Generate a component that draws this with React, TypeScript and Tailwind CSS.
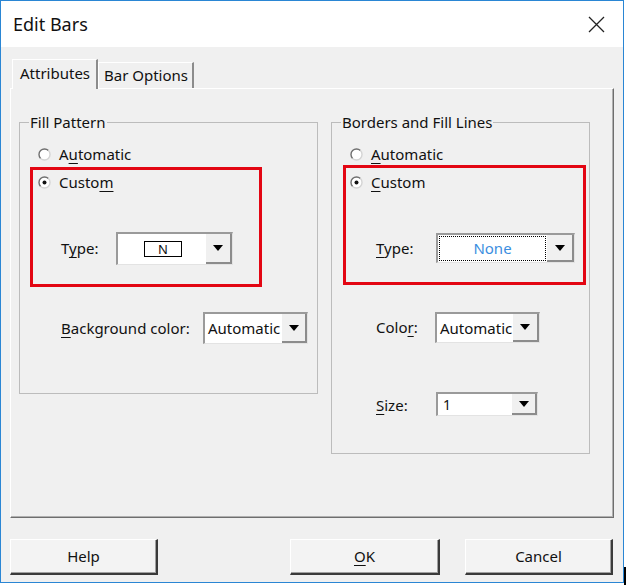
import type { ReactNode } from "react";

const Radio = ({ checked }: { checked?: boolean }) => (
  <svg width="13" height="13" viewBox="0 0 13 13" className="shrink-0">
    <circle cx="6.5" cy="6.5" r="5.5" fill="#ffffff" />
    <path d="M2.6 10.4 A5.5 5.5 0 0 1 10.4 2.6" fill="none" stroke="#6f6f6f" strokeWidth="1.4" />
    <path d="M10.4 2.6 A5.5 5.5 0 0 1 2.6 10.4" fill="none" stroke="#d4d4d4" strokeWidth="1.4" />
    {checked && <circle cx="6.5" cy="6.5" r="2" fill="#111111" />}
  </svg>
);

const Arrow = () => (
  <svg width="10" height="6" viewBox="0 0 10 6">
    <polygon points="0,0 10,0 5,6" fill="#000000" />
  </svg>
);

const Combo = ({
  className,
  btn,
  children,
}: {
  className: string;
  btn: string;
  children: ReactNode;
}) => (
  <div
    className={`flex border-t-2 border-l-2 border-r border-b border-t-[#9a9a9a] border-l-[#9a9a9a] border-r-[#e3e3e3] border-b-[#e3e3e3] bg-white ${className}`}
  >
    <div className="flex min-w-0 flex-1 items-center overflow-hidden whitespace-nowrap">{children}</div>
    <div
      className={`flex items-center justify-center border-r-2 border-b-2 border-r-[#8c8c8c] border-b-[#8c8c8c] bg-[#f0f0f0] ${btn}`}
    >
      <Arrow />
    </div>
  </div>
);

const U = ({ children }: { children: ReactNode }) => (
  <span className="underline decoration-1 underline-offset-[3px]">{children}</span>
);

const Button = ({ className, children }: { className: string; children: ReactNode }) => (
  <button
    className={`flex h-[36px] items-center justify-center border-t border-l border-r-2 border-b-2 border-t-white border-l-white border-r-[#3a3a3a] border-b-[#3a3a3a] bg-[#f3f3f3] text-[15px] shadow-[inset_-1px_-1px_0_#a0a0a0] ${className}`}
  >
    {children}
  </button>
);

export default function App() {
  return (
    <div className="relative h-[585px] w-[626px] bg-white font-['Noto_Sans',sans-serif] text-[15px] whitespace-nowrap text-[#111]">
      <div className="flex h-[583px] w-[624px] flex-col border border-[#2a86d4]">
        <div className="flex h-[46px] items-center justify-between bg-white pr-[18px] pl-[12px]">
          <span className="text-[18px]">Edit Bars</span>
          <svg width="17" height="17" viewBox="0 0 17 17">
            <path d="M1 1 L16 16 M16 1 L1 16" stroke="#222" strokeWidth="1.3" />
          </svg>
        </div>

        <div className="flex flex-1 flex-col bg-[#f0f0f0] px-[9px] pt-[12px]">
          {/* tabs */}
          <div className="flex h-[29px] items-end pl-[2px]">
            <div className="relative z-10 -mb-px flex h-[30px] w-[86px] items-center border-t border-l border-r-2 border-t-white border-l-white border-r-[#8c8c8c] bg-[#f0f0f0] pb-[2px] pl-[7px]">
              Attributes
            </div>
            <div className="flex h-[26px] w-[96px] items-center border-t border-l border-r-2 border-t-white border-l-white border-r-[#8c8c8c] bg-[#f0f0f0] pl-[5px]">
              Bar Options
            </div>
          </div>

          {/* panel */}
          <div className="flex h-[430px] w-[604px] items-start gap-[13px] border border-t-white border-l-white border-r-[#6e6e6e] border-b-[#6e6e6e] pt-[23px] pl-[8px] shadow-[inset_-1px_-1px_0_#b0b0b0]">
            <fieldset className="h-[282px] w-[299px] border border-[#bcbcbc] pl-[9px]">
              <legend className="px-px leading-[20px]">Fill Pattern</legend>
              <div className="mt-[12px] ml-[9px] flex h-[20px] items-center gap-[8px]">
                <Radio />
                <span>
                  A<U>u</U>tomatic
                </span>
              </div>
              <div className="mt-[3px] ml-px h-[120px] w-[232px] border-[3px] border-[#e30613] pt-[2px] pl-[5px]">
                <div className="flex h-[20px] items-center gap-[8px]">
                  <Radio checked />
                  <span>
                    Custo<U>m</U>
                  </span>
                </div>
                <div className="mt-[40px] ml-[23px] flex items-center">
                  <span className="w-[55px]">
                    T<U>y</U>pe:
                  </span>
                  <Combo className="h-[33px] w-[117px]" btn="w-[26px]">
                    <div className="flex w-full justify-center pl-[2px]">
                      <div className="flex h-[16px] w-[38px] items-center justify-center border border-black text-[13px] leading-none">
                        N
                      </div>
                    </div>
                  </Combo>
                </div>
              </div>
              <div className="mt-[25px] ml-[32px] flex items-center">
                <span className="w-[142px]">
                  <U>B</U>ackground color:
                </span>
                <Combo className="h-[32px] w-[105px]" btn="w-[25px]">
                  <span className="pl-[3px]">Automatic</span>
                </Combo>
              </div>
            </fieldset>

            <fieldset className="h-[342px] w-[259px] border border-[#bcbcbc] pl-[9px]">
              <legend className="px-px leading-[20px]">Borders and Fill Lines</legend>
              <div className="mt-[12px] ml-[9px] flex h-[20px] items-center gap-[8px]">
                <Radio />
                <span>
                  <U>A</U>utomatic
                </span>
              </div>
              <div className="mt-px ml-[2px] h-[120px] w-[243px] border-[3px] border-[#e30613] pt-[4px] pl-[4px]">
                <div className="flex h-[20px] items-center gap-[8px]">
                  <Radio checked />
                  <span>
                    <U>C</U>ustom
                  </span>
                </div>
                <div className="mt-[41px] ml-[26px] flex items-center">
                  <span className="w-[60px] pt-[1px]">
                    <U>T</U>ype:
                  </span>
                  <Combo className="h-[30px] w-[139px]" btn="w-[27px]">
                    <div className="m-[1px] flex h-[calc(100%-2px)] w-full items-center justify-center border border-dotted border-black text-[#3b8ee0]">
                      None
                    </div>
                  </Combo>
                </div>
              </div>
              <div className="mt-[27px] ml-[35px] flex items-center">
                <span className="w-[59px]">
                  Colo<U>r</U>:
                </span>
                <Combo className="h-[31px] w-[105px]" btn="w-[26px]">
                  <span className="pl-[3px]">Automatic</span>
                </Combo>
              </div>
              <div className="mt-[49px] ml-[35px] flex items-end">
                <span className="w-[60px] leading-[22px]">
                  <U>S</U>ize:
                </span>
                <Combo className="h-[24px] w-[102px]" btn="w-[25px]">
                  <span className="pl-[5px] text-[14px]">1</span>
                </Combo>
              </div>
            </fieldset>
          </div>

          {/* buttons */}
          <div className="mt-[21px] flex">
            <Button className="w-[148px]">Help</Button>
            <Button className="ml-[132px] w-[150px]">
              <U>O</U>K
            </Button>
            <Button className="ml-[25px] w-[148px]">Cancel</Button>
          </div>
        </div>
      </div>
      <div className="absolute top-[567px] left-[624px] h-[18px] w-[2px] bg-black" />
    </div>
  );
}
